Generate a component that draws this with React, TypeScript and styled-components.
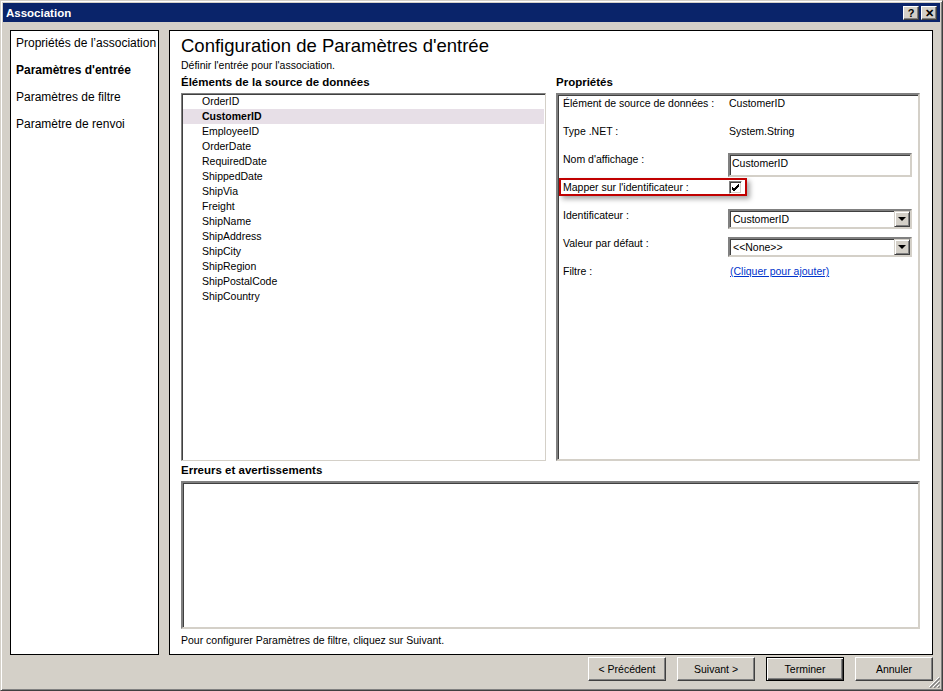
import styled, { createGlobalStyle } from 'styled-components'

const GlobalStyle = createGlobalStyle`
  body {
    margin: 0;
    font-family: "Liberation Sans", Arial, sans-serif;
    color: #000;
  }
`

const Window = styled.div`
  position: relative;
  width: 943px;
  height: 691px;
  box-sizing: border-box;
  background: #d4d0c8;
  border: 1px solid;
  border-color: #d4d0c8 #404040 #404040 #d4d0c8;
  box-shadow: inset 1px 1px #fff, inset -1px -1px #808080;
  padding: 2px;
  display: flex;
  flex-direction: column;
`

const TitleBar = styled.div`
  height: 19px;
  background: #0a246a;
  display: flex;
  align-items: center;
  padding: 0 3px;
  color: #fff;
  font-weight: bold;
  font-size: 11.5px;
`

const TitleText = styled.span`
  flex: 1;
`

const TitleButtons = styled.div`
  display: flex;
  gap: 2px;
`

const TitleButton = styled.div`
  width: 16px;
  height: 14px;
  box-sizing: border-box;
  background: #d4d0c8;
  border: 1px solid;
  border-color: #fff #404040 #404040 #fff;
  box-shadow: inset -1px -1px #808080;
  color: #000;
  font-size: 11px;
  font-weight: bold;
  line-height: 12px;
  text-align: center;
`

const Body = styled.div`
  flex: 1;
  display: flex;
  flex-direction: column;
  padding: 8px 7px 0 7px;
`

const Panels = styled.div`
  display: flex;
  gap: 10px;
  height: 625px;
`

const NavPanel = styled.div`
  width: 150px;
  box-sizing: border-box;
  border: 1px solid #000;
  background: #fff;
  padding: 5px 0 0 5px;
`

const NavItem = styled.div<{ $active?: boolean }>`
  font-size: 12px;
  line-height: 15px;
  margin-bottom: 12px;
  white-space: nowrap;
  font-weight: ${p => (p.$active ? 'bold' : 'normal')};
`

const MainPanel = styled.div`
  flex: 1;
  box-sizing: border-box;
  border: 1px solid #000;
  background: #fff;
  padding: 4px 12px 0 11px;
  display: flex;
  flex-direction: column;
`

const Heading = styled.div`
  font-size: 18.5px;
  line-height: 22px;
`

const SubHeading = styled.div`
  margin-top: 2px;
  font-size: 10.5px;
  line-height: 13px;
`

const Columns = styled.div`
  display: grid;
  grid-template-columns: 365px 364px;
  column-gap: 10px;
  margin-top: 3px;
`

const SectionLabel = styled.div<{ $gap?: number }>`
  font-weight: bold;
  font-size: 11.5px;
  line-height: 14px;
  margin-top: ${p => p.$gap ?? 0}px;
  margin-bottom: 4px;
  white-space: nowrap;
`

const Sunken = styled.div<{ $h: number }>`
  height: ${p => p.$h}px;
  box-sizing: border-box;
  background: #fff;
  border: 2px solid;
  border-color: #808080 #d4d0c8 #d4d0c8 #808080;
  box-shadow: inset 1px 1px #404040;
`

const ListBox = styled.div`
  height: 368px;
  box-sizing: border-box;
  background: #fff;
  border: 1px solid;
  border-color: #808080 #d4d0c8 #d4d0c8 #808080;
  box-shadow: inset 1px 1px #404040, inset -1px -1px #fff;
  padding: 0 1px;
`

const ListRow = styled.div<{ $selected?: boolean }>`
  height: 15px;
  line-height: 14px;
  padding-left: 19px;
  font-size: 10.5px;
  background: ${p => (p.$selected ? '#e7dfe7' : 'transparent')};
  font-weight: ${p => (p.$selected ? 'bold' : 'normal')};
`

const PropsBox = styled(Sunken)`
  padding: 2px 0 0 5px;
`

const PropRow = styled.div`
  position: relative;
  display: grid;
  grid-template-columns: 165px 184px;
  height: 28px;
  align-items: start;
  font-size: 10.5px;
`

const PropLabel = styled.div`
  line-height: 13px;
  position: relative;
  z-index: 1;
`

const PropValue = styled.div`
  line-height: 13px;
  padding-left: 1px;
`

const TextBox = styled.div`
  height: 24px;
  box-sizing: border-box;
  border: 2px solid;
  border-color: #808080 #d4d0c8 #d4d0c8 #808080;
  box-shadow: inset 1px 1px #404040;
  padding: 2px 0 0 2px;
  line-height: 13px;
`

const CheckBox = styled.div`
  width: 13px;
  height: 13px;
  box-sizing: border-box;
  margin-left: 1px;
  background: #fff;
  border: 1px solid;
  border-color: #808080 #fff #fff #808080;
  box-shadow: inset 1px 1px #404040, inset -1px -1px #d4d0c8;
  display: flex;
  align-items: center;
  justify-content: center;
  position: relative;
  z-index: 1;
`

const Highlight = styled.div`
  position: absolute;
  left: -4px;
  top: -3px;
  width: 188px;
  height: 18px;
  box-sizing: border-box;
  border: 2px solid #c00000;
  box-shadow: 3px 3px 5px rgba(0, 0, 0, 0.35);
`

const Combo = styled.div`
  height: 20px;
  box-sizing: border-box;
  border: 2px solid;
  border-color: #808080 #d4d0c8 #d4d0c8 #808080;
  box-shadow: inset 1px 1px #404040;
  display: flex;
  align-items: stretch;
`

const ComboText = styled.div`
  flex: 1;
  padding: 1px 0 0 3px;
  line-height: 14px;
`

const ComboButton = styled.div`
  width: 16px;
  box-sizing: border-box;
  background: #d4d0c8;
  border: 1px solid;
  border-color: #d4d0c8 #404040 #404040 #d4d0c8;
  box-shadow: inset 1px 1px #fff, inset -1px -1px #808080;
  display: flex;
  align-items: center;
  justify-content: center;
`

const Arrow = styled.div`
  width: 0;
  height: 0;
  border-left: 4px solid transparent;
  border-right: 4px solid transparent;
  border-top: 4px solid #000;
`

const Link = styled.a`
  color: #0033cc;
  text-decoration: underline;
  line-height: 13px;
  padding-left: 2px;
  cursor: pointer;
`

const Footer = styled.div`
  margin-top: 5px;
  font-size: 10.5px;
  line-height: 13px;
`

const ButtonRow = styled.div`
  display: flex;
  justify-content: flex-end;
  gap: 11px;
  margin-top: 2px;
`

const Button = styled.button<{ $default?: boolean }>`
  width: 78px;
  height: 24px;
  box-sizing: border-box;
  background: #d4d0c8;
  font-family: "Liberation Sans", Arial, sans-serif;
  font-size: 10.5px;
  color: #000;
  padding: 0;
  border: 1px solid;
  border-color: ${p => (p.$default ? '#000' : '#fff #404040 #404040 #fff')};
  box-shadow: ${p =>
    p.$default
      ? 'inset 1px 1px #fff, inset -1px -1px #404040, inset -2px -2px #808080'
      : 'inset -1px -1px #808080'};
`

const Grip = styled.svg`
  position: absolute;
  right: 2px;
  bottom: 2px;
`

const fields = [
  'OrderID', 'CustomerID', 'EmployeeID', 'OrderDate', 'RequiredDate', 'ShippedDate',
  'ShipVia', 'Freight', 'ShipName', 'ShipAddress', 'ShipCity', 'ShipRegion',
  'ShipPostalCode', 'ShipCountry',
]

function ComboBox({ value }: { value: string }) {
  return (
    <Combo>
      <ComboText>{value}</ComboText>
      <ComboButton><Arrow /></ComboButton>
    </Combo>
  )
}

export default function App() {
  return (
    <>
      <GlobalStyle />
      <Window>
        <TitleBar>
          <TitleText>Association</TitleText>
          <TitleButtons>
            <TitleButton>?</TitleButton>
            <TitleButton>✕</TitleButton>
          </TitleButtons>
        </TitleBar>
        <Body>
          <Panels>
            <NavPanel>
              <NavItem>Propriétés de l’association</NavItem>
              <NavItem $active>Paramètres d'entrée</NavItem>
              <NavItem>Paramètres de filtre</NavItem>
              <NavItem>Paramètre de renvoi</NavItem>
            </NavPanel>
            <MainPanel>
              <Heading>Configuration de Paramètres d'entrée</Heading>
              <SubHeading>Définir l'entrée pour l'association.</SubHeading>
              <Columns>
                <div>
                  <SectionLabel>Éléments de la source de données</SectionLabel>
                  <ListBox>
                    {fields.map(f => (
                      <ListRow key={f} $selected={f === 'CustomerID'}>{f}</ListRow>
                    ))}
                  </ListBox>
                </div>
                <div>
                  <SectionLabel>Propriétés</SectionLabel>
                  <PropsBox $h={368}>
                    <PropRow>
                      <PropLabel>Élément de source de données :</PropLabel>
                      <PropValue>CustomerID</PropValue>
                    </PropRow>
                    <PropRow>
                      <PropLabel>Type .NET :</PropLabel>
                      <PropValue>System.String</PropValue>
                    </PropRow>
                    <PropRow>
                      <PropLabel>Nom d'affichage :</PropLabel>
                      <TextBox>CustomerID</TextBox>
                    </PropRow>
                    <PropRow>
                      <Highlight />
                      <PropLabel>Mapper sur l'identificateur :</PropLabel>
                      <CheckBox>
                        <svg width="9" height="9" viewBox="0 0 9 9">
                          <path d="M1 4 L3 6 L8 1 M1 5 L3 7 L8 2 M1 6 L3 8 L8 3" stroke="#000" strokeWidth="1" fill="none" />
                        </svg>
                      </CheckBox>
                    </PropRow>
                    <PropRow>
                      <PropLabel>Identificateur :</PropLabel>
                      <ComboBox value="CustomerID" />
                    </PropRow>
                    <PropRow>
                      <PropLabel>Valeur par défaut :</PropLabel>
                      <ComboBox value="<<None>>" />
                    </PropRow>
                    <PropRow>
                      <PropLabel>Filtre :</PropLabel>
                      <Link>(Cliquer pour ajouter)</Link>
                    </PropRow>
                  </PropsBox>
                </div>
              </Columns>
              <SectionLabel $gap={2}>Erreurs et avertissements</SectionLabel>
              <Sunken $h={148} />
              <Footer>Pour configurer Paramètres de filtre, cliquez sur Suivant.</Footer>
            </MainPanel>
          </Panels>
          <ButtonRow>
            <Button>&lt; Précédent</Button>
            <Button>Suivant &gt;</Button>
            <Button $default>Terminer</Button>
            <Button>Annuler</Button>
          </ButtonRow>
        </Body>
        <Grip width="12" height="12" viewBox="0 0 12 12">
          <path d="M11 1 L1 11 M11 5 L5 11 M11 9 L9 11" stroke="#fff" strokeWidth="1" />
          <path d="M12 2 L2 12 M12 6 L6 12 M12 10 L10 12" stroke="#808080" strokeWidth="1.4" />
        </Grip>
      </Window>
    </>
  )
}
